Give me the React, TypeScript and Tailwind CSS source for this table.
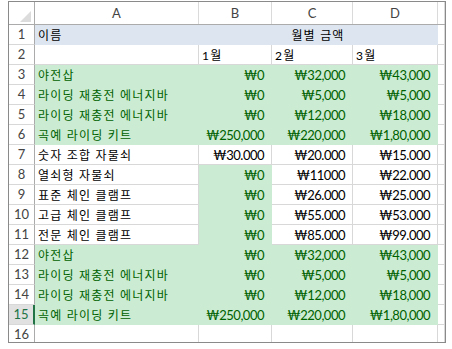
type Cell = { text?: string; right?: boolean; fill?: 'green' | 'blue' };

const green = (a: string, b: string, c: string, d: string) => [
  { text: a, fill: 'green' as const },
  { text: b, right: true, fill: 'green' as const },
  { text: c, right: true, fill: 'green' as const },
  { text: d, right: true, fill: 'green' as const },
];

const lock = (a: string, b: string, c: string, d: string, bGreen: boolean): Cell[] => [
  { text: a },
  { text: b, right: true, fill: bGreen ? 'green' : undefined },
  { text: c, right: true },
  { text: d, right: true },
];

const rows: Cell[][] = [
  green('야전삽', '₩0', '₩32,000', '₩43,000'),
  green('라이딩 재충전 에너지바', '₩0', '₩5,000', '₩5,000'),
  green('라이딩 재충전 에너지바', '₩0', '₩12,000', '₩18,000'),
  green('곡예 라이딩 키트', '₩250,000', '₩220,000', '₩1,80,000'),
  lock('숫자 조합 자물쇠', '₩30.000', '₩20.000', '₩15.000', false),
  lock('열쇠형 자물쇠', '₩0', '₩11000', '₩22.000', true),
  lock('표준 체인 클램프', '₩0', '₩26.000', '₩25.000', true),
  lock('고급 체인 클램프', '₩0', '₩55.000', '₩53.000', true),
  lock('전문 체인 클램프', '₩0', '₩85.000', '₩99.000', true),
  green('야전삽', '₩0', '₩32,000', '₩43,000'),
  green('라이딩 재충전 에너지바', '₩0', '₩5,000', '₩5,000'),
  green('라이딩 재충전 에너지바', '₩0', '₩12,000', '₩18,000'),
  green('곡예 라이딩 키트', '₩250,000', '₩220,000', '₩1,80,000'),
];

const widths = ['w-[164px]', 'w-[73px]', 'w-[81px]', 'w-[85px]'];

function DataCell({ cell, width }: { cell: Cell; width: string }) {
  const fill =
    cell.fill === 'green'
      ? 'bg-[#cbecd2] border-[#cbecd2] text-[#006100]'
      : cell.fill === 'blue'
        ? 'bg-[#dde6f0] border-[#dde6f0] text-black'
        : 'bg-white border-[#d8d8d8] text-black';
  return (
    <div
      className={`${width} ${fill} h-full shrink-0 border-r border-b flex items-center pt-[2px] overflow-hidden whitespace-nowrap ${
        cell.right
          ? 'justify-end pr-[7px] text-[13px] tracking-[-0.5px]'
          : 'pl-[3px] text-[12px] tracking-[1.2px]'
      }`}
    >
      {cell.text}
    </div>
  );
}

function RowHead({ n, selected }: { n: number; selected?: boolean }) {
  return (
    <div
      className={`w-[26px] h-full shrink-0 flex items-center justify-center border-b border-[#d8d8d8] text-[13px] ${
        selected
          ? 'bg-[#e1e1e1] text-[#217346] border-r-2 border-r-[#217346]'
          : 'bg-white text-[#444] border-r border-r-[#ababab]'
      }`}
    >
      {n}
    </div>
  );
}

function EndCell() {
  return <div className="w-[7px] h-full shrink-0 border-r border-b border-[#d8d8d8] bg-white" />;
}

export default function App() {
  return (
    <div className="w-[452px] h-[349px] bg-white pt-[1px] pl-[8px]">
      <div
        className="w-[438px] h-[342px] border border-[#8a8a8a] overflow-hidden text-[13px] leading-none"
        style={{ fontFamily: '"Lato", "Noto Sans CJK KR", sans-serif' }}
      >
        {/* column headers */}
        <div className="flex h-[23px] border-b border-[#ababab] text-[#444]">
          <div className="w-[26px] shrink-0 border-r border-[#ababab] flex items-end justify-end pr-[3px] pb-[2px]">
            <svg width="11" height="11" viewBox="0 0 11 11">
              <polygon points="0,11 11,11 11,0" fill="#dcdcdc" />
            </svg>
          </div>
          {['A', 'B', 'C', 'D'].map((l, i) => (
            <div
              key={l}
              className={`${widths[i]} shrink-0 border-r border-[#dadada] flex items-center justify-center`}
            >
              {l}
            </div>
          ))}
          <div className="w-[7px] shrink-0 border-r border-[#dadada]" />
        </div>

        {/* row 1 */}
        <div className="flex h-[20px]">
          <RowHead n={1} />
          <DataCell cell={{ text: '이름', fill: 'blue' }} width="w-[164px]" />
          <div className="w-[239px] h-full shrink-0 bg-[#dde6f0] border-r border-b border-[#dde6f0] flex items-center justify-center pt-[2px] text-[12px] tracking-[1.2px]">
            월별 금액
          </div>
          <EndCell />
        </div>

        {/* row 2 */}
        <div className="flex h-[20px]">
          <RowHead n={2} />
          <DataCell cell={{}} width="w-[164px]" />
          <DataCell cell={{ text: '1월' }} width="w-[73px]" />
          <DataCell cell={{ text: '2월' }} width="w-[81px]" />
          <DataCell cell={{ text: '3월' }} width="w-[85px]" />
          <EndCell />
        </div>

        {rows.map((r, i) => (
          <div key={i} className="flex h-[20px]">
            <RowHead n={i + 3} selected={i + 3 === 15} />
            {r.map((c, j) => (
              <DataCell key={j} cell={c} width={widths[j]} />
            ))}
            <EndCell />
          </div>
        ))}

        {/* row 16 */}
        <div className="flex h-[20px]">
          <RowHead n={16} />
          {widths.map((w) => (
            <DataCell key={w} cell={{}} width={w} />
          ))}
          <EndCell />
        </div>
      </div>
    </div>
  );
}
